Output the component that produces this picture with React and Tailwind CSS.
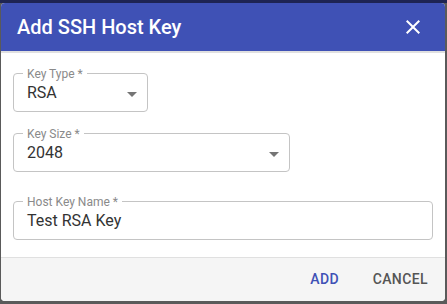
import React from "react";

function ArrowDown() {
  return (
    <svg viewBox="0 0 24 24" className="absolute right-[3px] top-[8px] w-6 h-6 fill-[#757575]">
      <path d="M7 10l5 5 5-5z" />
    </svg>
  );
}

function Field({ label, value, width, select }) {
  return (
    <div className={`relative h-[39px] rounded-[4px] border border-[#c4c4c4] flex items-center pl-[13px] ${width}`}>
      <span className="absolute left-[9px] top-0 -translate-y-1/2 bg-white px-[4px] text-[12px] leading-[12px] text-[#8a8a8a]">
        {label}
      </span>
      <span className="text-[16px] text-[#333333]">{value}</span>
      {select && <ArrowDown />}
    </div>
  );
}

export default function App() {
  return (
    <div
      className="w-[447px] h-[304px] bg-[#5a5a5a] border-t-[3px] border-[#1e2453] overflow-hidden"
      style={{ fontFamily: "Roboto, 'Liberation Sans', sans-serif" }}
    >
      <div className="ml-[1px] w-[444px] h-[298px] rounded-[4px] overflow-hidden bg-white flex flex-col">
        {/* Header */}
        <div className="h-[48px] bg-[#3f51b5] flex items-center justify-between pl-4 pr-[20px]">
          <div className="text-[20px] leading-6 font-medium text-white">Add SSH Host Key</div>
          <svg viewBox="0 0 24 24" className="w-6 h-6 fill-white">
            <path d="M19 6.41 17.59 5 12 10.59 6.41 5 5 6.41 10.59 12 5 17.59 6.41 19 12 13.41 17.59 19 19 17.59 13.41 12z" />
          </svg>
        </div>
        <div className="h-[2px] bg-[#e0e0e0]" />

        {/* Body */}
        <div className="flex-1 flex flex-col pl-[12px] pt-[20px]">
          <Field label="Key Type *" value="RSA" width="w-[135px]" select />
          <div className="mt-[21px]">
            <Field label="Key Size *" value="2048" width="w-[277px]" select />
          </div>
          <div className="mt-[29px]">
            <Field label="Host Key Name *" value="Test RSA Key" width="w-[420px]" />
          </div>
        </div>

        {/* Footer */}
        <div className="h-[44px] border-t border-[#e0e0e0] bg-[#f5f5f5] flex items-center justify-end gap-2 pr-[9px]">
          <button className="w-16 h-9 text-[14px] font-medium tracking-[0.4px] text-[#3f51b5]">ADD</button>
          <button className="px-2 h-9 text-[14px] font-medium tracking-[0.4px] text-[#555555]">CANCEL</button>
        </div>
      </div>
    </div>
  );
}
